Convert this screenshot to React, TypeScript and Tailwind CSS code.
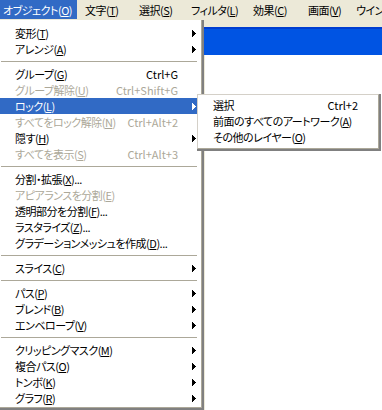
import React from "react";

const Arrow = ({ white }: { white?: boolean }) => (
  <svg
    width="4"
    height="7"
    viewBox="0 0 4 7"
    shapeRendering="crispEdges"
    className={white ? "text-white shrink-0" : "text-black shrink-0"}
  >
    <rect x="0" y="0" width="1" height="7" fill="currentColor" />
    <rect x="1" y="1" width="1" height="5" fill="currentColor" />
    <rect x="2" y="2" width="1" height="3" fill="currentColor" />
    <rect x="3" y="3" width="1" height="1" fill="currentColor" />
  </svg>
);

type Item =
  | { sep: true }
  | {
      sep?: false;
      label: string;
      key?: string;
      tail?: string;
      shortcut?: string;
      arrow?: boolean;
      disabled?: boolean;
      hl?: boolean;
    };

const items: Item[] = [
  { label: "変形", key: "T", arrow: true },
  { label: "アレンジ", key: "A", arrow: true },
  { sep: true },
  { label: "グループ", key: "G", shortcut: "Ctrl+G" },
  { label: "グループ解除", key: "U", shortcut: "Ctrl+Shift+G", disabled: true },
  { label: "ロック", key: "L", arrow: true, hl: true },
  { label: "すべてをロック解除", key: "N", shortcut: "Ctrl+Alt+2", disabled: true },
  { label: "隠す", key: "H", arrow: true },
  { label: "すべてを表示", key: "S", shortcut: "Ctrl+Alt+3", disabled: true },
  { sep: true },
  { label: "分割・拡張", key: "X", tail: "..." },
  { label: "アピアランスを分割", key: "E", disabled: true },
  { label: "透明部分を分割", key: "F", tail: "..." },
  { label: "ラスタライズ", key: "Z", tail: "..." },
  { label: "グラデーションメッシュを作成", key: "D", tail: "..." },
  { sep: true },
  { label: "スライス", key: "C", arrow: true },
  { sep: true },
  { label: "パス", key: "P", arrow: true },
  { label: "ブレンド", key: "B", arrow: true },
  { label: "エンベロープ", key: "V", arrow: true },
  { sep: true },
  { label: "クリッピングマスク", key: "M", arrow: true },
  { label: "複合パス", key: "O", arrow: true },
  { label: "トンボ", key: "K", arrow: true },
  { label: "グラフ", key: "R", arrow: true },
];

const Label = ({ label, k, tail }: { label: string; k?: string; tail?: string }) => (
  <span className="flex-1 whitespace-nowrap">
    {label}
    {k && (
      <>
        (<span className="underline underline-offset-[1px]">{k}</span>)
      </>
    )}
    {tail}
  </span>
);

const menuBar = [
  { label: "文字", k: "T", w: "w-[54px]" },
  { label: "選択", k: "S", w: "w-[52px]" },
  { label: "フィルタ", k: "L", w: "w-[62px]" },
  { label: "効果", k: "C", w: "w-[55px]" },
  { label: "画面", k: "V", w: "w-[48px]" },
  { label: "ウインドウ", k: "W", w: "w-[80px]" },
];

export default function App() {
  return (
    <div
      className="relative w-[382px] h-[410px] overflow-hidden bg-white text-[11px] tracking-[-0.5px] leading-[16px] text-black [font-feature-settings:'palt'] flex flex-col"
      style={{ fontFamily: '"Noto Sans CJK JP", "Noto Sans", sans-serif' }}
    >
      {/* Menu bar */}
      <div className="flex h-[20px] bg-[#ece9d8] shrink-0 whitespace-nowrap overflow-hidden">
        <div className="w-[77px] h-[19px] shrink-0 bg-[#316ac5] text-white pl-[3px] flex items-center">
          オブジェクト(<span className="underline underline-offset-[1px]">O</span>)
        </div>
        {menuBar.map((m) => (
          <div key={m.label} className={`${m.w} shrink-0 h-[19px] pl-[8px] flex items-center`}>
            {m.label}(<span className="underline underline-offset-[1px]">{m.k}</span>)
          </div>
        ))}
      </div>

      <div className="flex flex-1">
        {/* Dropdown menu */}
        <div className="w-[204px] h-[390px] shrink-0 border-r-2 border-b-2 border-[#808080]">
          <div className="h-full border-r border-b border-[#aca899] pt-[5px] pr-[3px] bg-white">
            {items.map((it, i) =>
              it.sep ? (
                <div key={i} className="h-[9px] flex items-center pl-[1px] pr-[1px]">
                  <div className="h-px w-full bg-[#aca899]" />
                </div>
              ) : (
                <div
                  key={i}
                  className={`flex h-[16px] items-center pl-[15px] ${
                    it.shortcut ? "pr-[20px]" : "pr-[2px]"
                  } ${
                    it.hl
                      ? "bg-[#316ac5] text-white"
                      : it.disabled
                      ? "text-[#aca899]"
                      : "text-black"
                  }`}
                >
                  <Label label={it.label} k={it.key} tail={it.tail} />
                  {it.shortcut && (
                    <span className="whitespace-nowrap tracking-normal">{it.shortcut}</span>
                  )}
                  {it.arrow && <Arrow white={it.hl} />}
                </div>
              )
            )}
          </div>
        </div>

        {/* Window behind */}
        <div className="flex-1 flex flex-col">
          <div className="h-[7px] bg-[#ece9d8]" />
          <div className="h-[28px] bg-[#0054e3] border-t-2 border-[#003dd0]" />
          <div className="flex-1 bg-white border-l border-[#ece9d8]" />
        </div>
      </div>

      {/* Submenu */}
      <div className="absolute left-[197px] top-[94px] w-[184px] h-[57px] border-r-2 border-b-2 border-[#808080]">
        <div className="h-full border-r border-b border-[#aca899] border-t border-l border-t-[#d4d0c8] border-l-[#d4d0c8] bg-white pt-[2px]">
          <div className="flex h-[16px] items-center pl-[15px] pr-[20px]">
            <span className="flex-1">選択</span>
            <span className="tracking-normal">Ctrl+2</span>
          </div>
          <div className="flex h-[16px] items-center pl-[15px]">
            <Label label="前面のすべてのアートワーク" k="A" />
          </div>
          <div className="flex h-[16px] items-center pl-[15px]">
            <Label label="その他のレイヤー" k="O" />
          </div>
        </div>
      </div>
    </div>
  );
}
